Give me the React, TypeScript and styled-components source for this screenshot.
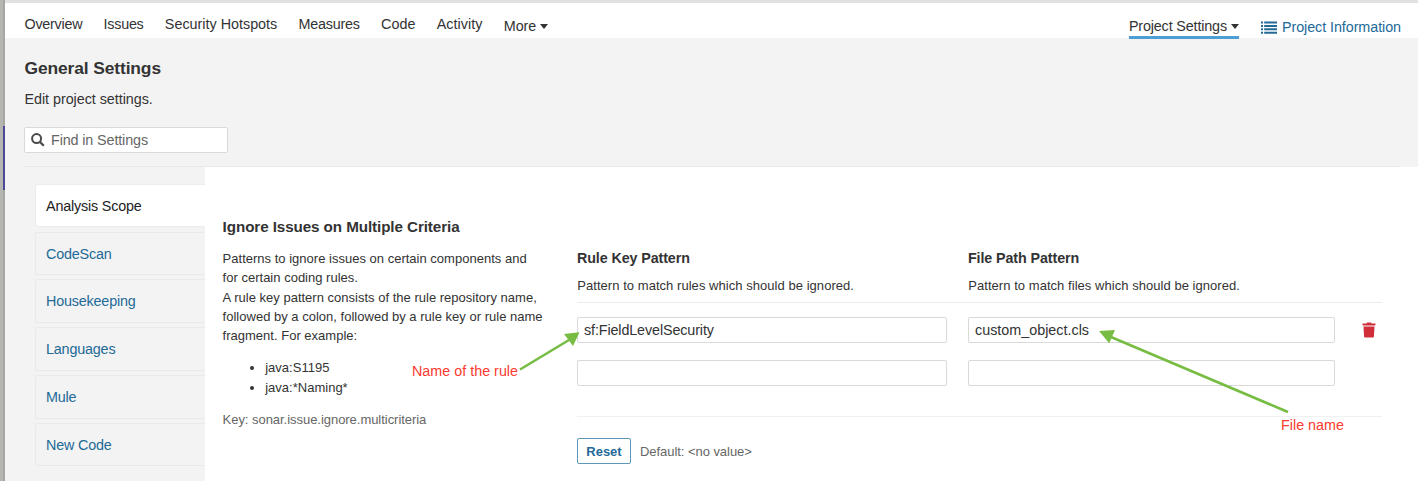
import React from 'react';
import styled, { createGlobalStyle, css } from 'styled-components';

const GlobalStyle = createGlobalStyle`
  * { box-sizing: border-box; }
  html, body { margin: 0; padding: 0; background: #fff; overflow: hidden; }
  body { font-family: 'Liberation Sans', Arial, sans-serif; color: #333; font-size: 14.35px; }
  h1, h2, h3, p, ul { margin: 0; padding: 0; }
`;

const Window = styled.div`
  position: relative;
  display: flex;
  width: 1418px;
  height: 481px;
  overflow: hidden;
`;

const Edge = styled.div`
  display: flex;
  justify-content: flex-end;
  flex: 0 0 5px;
  background: #b5b5b2;
`;

const EdgeInner = styled.div`
  width: 2px;
  padding-top: 126px;
  background: #a6a6a3;
`;

const EdgeMark = styled.div`
  height: 64px;
  background: #4a4a94;
`;

const Page = styled.div`
  display: flex;
  flex-direction: column;
  flex: 1;
  min-width: 0;
  background: #f3f3f3;
`;

const NavBar = styled.nav`
  display: flex;
  justify-content: space-between;
  height: 38px;
  flex: none;
  padding: 0 17px 0 19.5px;
  border-top: 3px solid #e1e1e1;
  background: #fff;
`;

const NavGroup = styled.div<{ $gap: number }>`
  display: flex;
  align-items: flex-start;
  gap: ${(p) => p.$gap}px;
`;

const NavItem = styled.a<{ $top?: number; $tracking?: number; $active?: boolean; $link?: boolean }>`
  display: flex;
  align-items: center;
  flex: none;
  margin-top: ${(p) => p.$top ?? 12}px;
  line-height: 18px;
  letter-spacing: ${(p) => p.$tracking ?? 0}px;
  white-space: nowrap;
  color: ${(p) => (p.$link ? '#236a97' : '#333')};
  ${(p) =>
    p.$active &&
    css`
      height: 22px;
      padding-bottom: 1px;
      border-bottom: 3px solid #4b9fd5;
    `}
`;

const Caret = styled.span`
  margin-left: 4px;
  border: 4px solid transparent;
  border-top: 5px solid #333;
  border-bottom: 0;
`;

const ListIcon = styled.svg`
  width: 16px;
  height: 13px;
  margin-right: 5px;
  fill: #236a97;
`;

const Header = styled.header`
  height: 129px;
  flex: none;
  margin: 0 18px 0 19px;
  padding-top: 20px;
  border-bottom: 1px solid #e9e9e9;
`;

const Title = styled.h1`
  padding-left: 0.5px;
  font-size: 17.4px;
  line-height: 20px;
  font-weight: 700;
  letter-spacing: -0.11px;
`;

const Subtitle = styled.p`
  margin-top: 12px;
  padding-left: 0.5px;
  line-height: 18px;
  letter-spacing: -0.04px;
`;

const SearchBox = styled.div`
  display: flex;
  align-items: center;
  width: 204px;
  height: 26px;
  margin-top: 19px;
  padding-left: 6px;
  border: 1px solid #d9d9d9;
  border-radius: 2px;
  background: #fff;
  color: #666;
  letter-spacing: -0.12px;
`;

const SearchIcon = styled.svg`
  width: 14px;
  height: 14px;
  margin-right: 6px;
  fill: none;
  stroke: #4a4a4a;
`;

const Body = styled.div`
  display: flex;
  flex: 1;
  min-height: 0;
`;

const SideMenu = styled.div`
  display: flex;
  flex-direction: column;
  gap: 4.5px;
  flex: 0 0 200px;
  padding: 16.8px 0 0 30px;
`;

const SideItem = styled.a<{ $active?: boolean }>`
  height: 43.35px;
  flex: none;
  padding-left: 10px;
  border: 1px solid ${(p) => (p.$active ? '#ececec' : '#e9e9e9')};
  border-right: 0;
  border-radius: 3px 0 0 3px;
  background: ${(p) => (p.$active ? '#fff' : 'transparent')};
  color: ${(p) => (p.$active ? '#222' : '#236a97')};
  line-height: 42px;
  letter-spacing: -0.18px;
`;

const Panel = styled.main`
  display: flex;
  flex: 1;
  padding: 50px 36px 0 17.6px;
  background: #fff;
  font-size: 13px;
`;

const Description = styled.section`
  width: 354.4px;
  flex: none;
  line-height: 19.35px;
  letter-spacing: 0.01px;
  white-space: nowrap;
`;

const SettingName = styled.h2`
  font-size: 15.2px;
  line-height: 20px;
  letter-spacing: -0.08px;
  margin-bottom: 12px;
`;

const ExampleList = styled.ul`
  margin-top: 12.5px;
  padding-left: 42.6px;
`;

const KeyText = styled.div`
  margin-top: 13px;
  color: #666;
  letter-spacing: -0.04px;
`;

const Form = styled.section`
  flex: 1;
  padding-top: 31px;
`;

const FieldRow = styled.div`
  display: grid;
  grid-template-columns: 370px 367px 1fr;
  column-gap: 21px;
  align-items: center;
  margin-bottom: 17px;
`;

const HeadRow = styled(FieldRow)`
  height: 55px;
  margin-bottom: 14px;
  align-items: start;
  border-bottom: 1px solid #ebebeb;
`;

const ColumnTitle = styled.h3`
  font-size: 14.3px;
  line-height: 20px;
  letter-spacing: -0.1px;
`;

const ColumnHint = styled.p`
  margin-top: 9px;
  padding-left: 0.3px;
  line-height: 18px;
  letter-spacing: 0.045px;
  white-space: nowrap;
`;

const Field = styled.div<{ $tracking?: number }>`
  height: 26px;
  padding-left: 6px;
  border: 1px solid #d9d9d9;
  border-radius: 2px;
  background: #fff;
  font-size: 14.35px;
  line-height: 25px;
  letter-spacing: ${(p) => p.$tracking ?? 0}px;
`;

const TrashIcon = styled.svg`
  width: 14px;
  height: 16px;
  margin-left: 6px;
  fill: #d02f3a;
`;

const FormFooter = styled.div`
  display: flex;
  align-items: center;
  margin-top: 30px;
  padding-top: 21px;
  border-top: 1px solid #f0f0f0;
  color: #666;
  letter-spacing: -0.05px;
`;

const ResetButton = styled.button`
  width: 54px;
  height: 26px;
  margin-right: 9px;
  padding: 0;
  border: 1px solid #5e96b9;
  border-radius: 2px;
  background: #fff;
  color: #236a97;
  font: 700 13px 'Liberation Sans', Arial, sans-serif;
`;

const Arrows = styled.svg`
  position: absolute;
  top: 0;
  left: 0;
  pointer-events: none;
  stroke: #77bc43;
  fill: #77bc43;
`;

const Note = styled.span<{ $x: number; $y: number }>`
  position: absolute;
  left: ${(p) => p.$x}px;
  top: ${(p) => p.$y}px;
  color: #fb3b2f;
  font-size: 14.35px;
  line-height: 18px;
  white-space: nowrap;
`;

const navLinks = [
  { name: 'Overview', tracking: -0.25 },
  { name: 'Issues', tracking: -0.25 },
  { name: 'Security Hotspots', tracking: 0 },
  { name: 'Measures', tracking: -0.22 },
  { name: 'Code', tracking: 0 },
  { name: 'Activity', tracking: 0.05 },
];
const categories = ['Analysis Scope', 'CodeScan', 'Housekeeping', 'Languages', 'Mule', 'New Code'];
const rows = [
  { rule: 'sf:FieldLevelSecurity', file: 'custom_object.cls' },
  { rule: '', file: '' },
];

export default function App() {
  return (
    <Window>
      <GlobalStyle />
      <Edge>
        <EdgeInner>
          <EdgeMark />
        </EdgeInner>
      </Edge>
      <Page>
        <NavBar>
          <NavGroup $gap={21.3}>
            {navLinks.map((link) => (
              <NavItem key={link.name} $tracking={link.tracking}>
                {link.name}
              </NavItem>
            ))}
            <NavItem $top={14} $tracking={-0.1}>
              More
              <Caret />
            </NavItem>
          </NavGroup>
          <NavGroup $gap={22}>
            <NavItem $top={14} $tracking={-0.15} $active>
              Project Settings
              <Caret />
            </NavItem>
            <NavItem $top={15} $tracking={-0.07} $link>
              <ListIcon viewBox="0 0 16 13">
                {[0.5, 3.9, 7.3, 10.7].map((y) => (
                  <path key={y} d={`M0 ${y}h2v2h-2zM3.2 ${y}h12.8v2h-12.8z`} />
                ))}
              </ListIcon>
              Project Information
            </NavItem>
          </NavGroup>
        </NavBar>
        <Header>
          <Title>General Settings</Title>
          <Subtitle>Edit project settings.</Subtitle>
          <SearchBox>
            <SearchIcon viewBox="0 0 14 14">
              <circle cx="5.6" cy="5.6" r="4.5" strokeWidth="2" />
              <path d="M9 9l3.8 3.8" strokeWidth="2.3" />
            </SearchIcon>
            Find in Settings
          </SearchBox>
        </Header>
        <Body>
          <SideMenu>
            {categories.map((name, i) => (
              <SideItem key={name} $active={i === 0}>
                {name}
              </SideItem>
            ))}
          </SideMenu>
          <Panel>
            <Description>
              <SettingName>Ignore Issues on Multiple Criteria</SettingName>
              Patterns to ignore issues on certain components and
              <br />
              for certain coding rules.
              <br />
              A rule key pattern consists of the rule repository name,
              <br />
              followed by a colon, followed by a rule key or rule name
              <br />
              fragment. For example:
              <ExampleList>
                <li>java:S1195</li>
                <li>java:*Naming*</li>
              </ExampleList>
              <KeyText>Key: sonar.issue.ignore.multicriteria</KeyText>
            </Description>
            <Form>
              <HeadRow>
                <div>
                  <ColumnTitle>Rule Key Pattern</ColumnTitle>
                  <ColumnHint>Pattern to match rules which should be ignored.</ColumnHint>
                </div>
                <div>
                  <ColumnTitle>File Path Pattern</ColumnTitle>
                  <ColumnHint>Pattern to match files which should be ignored.</ColumnHint>
                </div>
              </HeadRow>
              {rows.map((row, i) => (
                <FieldRow key={i}>
                  <Field $tracking={-0.12}>{row.rule}</Field>
                  <Field>{row.file}</Field>
                  {row.rule && (
                    <TrashIcon viewBox="0 0 14 16">
                      <path d="M0.5 1.5h4l.5-1h4l.5 1h4v1.7h-13z" />
                      <path d="M1.2 3.2h11.6v1.5h-11.6z" opacity=".45" />
                      <path d="M1.5 4.7h11l-.6 10a1 1 0 0 1-1 .8h-7.8a1 1 0 0 1-1-.8z" />
                    </TrashIcon>
                  )}
                </FieldRow>
              ))}
              <FormFooter>
                <ResetButton>Reset</ResetButton>
                Default: &lt;no value&gt;
              </FormFooter>
            </Form>
          </Panel>
        </Body>
      </Page>
      <Arrows width="1418" height="481">
        <path d="M520 369.5L569 340" strokeWidth="2.6" />
        <path d="M579.5 332.3L564 334L573 346Z" stroke="none" />
        <path d="M1288 412L1111 337" strokeWidth="2.6" />
        <path d="M1099 331L1115 330L1109.2 343.3Z" stroke="none" />
      </Arrows>
      <Note $x={412} $y={362}>Name of the rule</Note>
      <Note $x={1281} $y={416}>File name</Note>
    </Window>
  );
}
